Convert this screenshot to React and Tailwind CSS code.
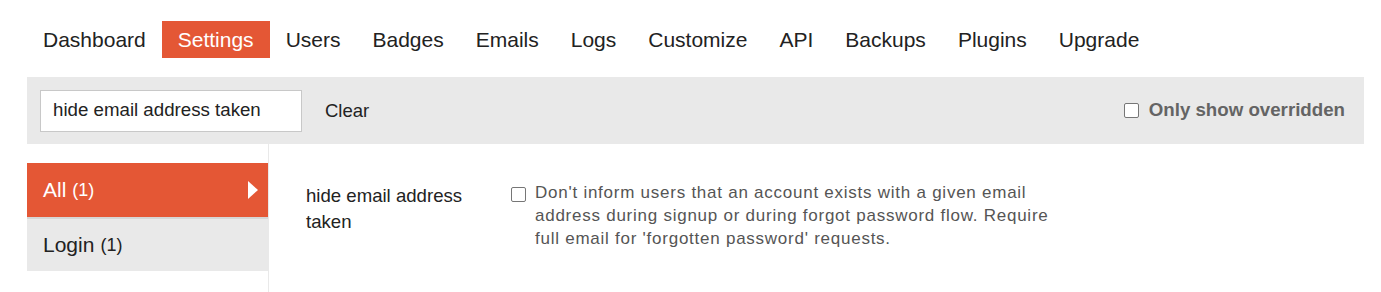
import React from "react";

const TABS = ["Dashboard", "Settings", "Users", "Badges", "Emails", "Logs", "Customize", "API", "Backups", "Plugins", "Upgrade"];

function Checkbox() {
	return <span className="inline-block w-[15px] h-[15px] border border-[#767676] rounded-[2px] bg-white shrink-0" />;
}

export default function App() {
	return (
		<div className="w-[1381px] h-[292px] bg-white px-[27px] pt-[21px] overflow-hidden text-[#222]" style={{ fontFamily: "'Liberation Sans', Arial, sans-serif" }}>
			{/* top nav */}
			<ul className="flex items-center">
				{TABS.map((t) => (
					<li key={t} className={"h-[37px] px-4 flex items-center text-[21px] " + (t === "Settings" ? "bg-[#e45735] text-white" : "text-[#222]")}>
						{t}
					</li>
				))}
			</ul>

			{/* filter bar */}
			<div className="mt-[19px] w-[1337px] h-[67px] bg-[#e9e9e9] flex items-center pl-[13px] pr-[19px]">
				<div className="w-[262px] h-[42px] bg-white border border-[#c8c8c8] flex items-center px-[12px] text-[18.7px] text-[#222]">hide email address taken</div>
				<span className="ml-[23px] text-[18.5px] text-[#222]">Clear</span>
				<div className="ml-auto flex items-center gap-[10px]">
					<Checkbox />
					<span className="font-bold text-[18.7px] text-[#646464]">Only show overridden</span>
				</div>
			</div>

			{/* body */}
			<div className="flex">
				<div className="w-[242px] border-r border-[#e9e9e9] pt-[19px] h-[160px] shrink-0">
					<div className="h-[54px] bg-[#e45735] text-white flex items-center pl-4 pr-[10px] text-[21px]">
						<span>All</span>
						<span className="ml-[6px] text-[18px]">(1)</span>
						<span className="ml-auto w-0 h-0 border-y-[9px] border-y-transparent border-l-[10px] border-l-white" />
					</div>
					<div className="h-[54px] bg-[#e9e9e9] border-t-2 border-[#d6d6d6] flex items-center pl-4 text-[21px] text-[#222]">
						<span>Login</span>
						<span className="ml-[6px] text-[18px]">(1)</span>
					</div>
				</div>
				<div className="flex pl-[37px]">
					<div className="w-[190px] pt-[39px] text-[18.6px] leading-[26px] text-[#222]">hide email address taken</div>
					<div className="ml-[15px] flex items-start gap-[9px] pt-[37px]">
						<span className="mt-[4px]"><Checkbox /></span>
						<p className="w-[530px] text-[17px] tracking-[0.75px] leading-[23px] text-[#555]">Don't inform users that an account exists with a given email address during signup or during forgot password flow. Require full email for 'forgotten password' requests.</p>
					</div>
				</div>
			</div>
		</div>
	);
}
